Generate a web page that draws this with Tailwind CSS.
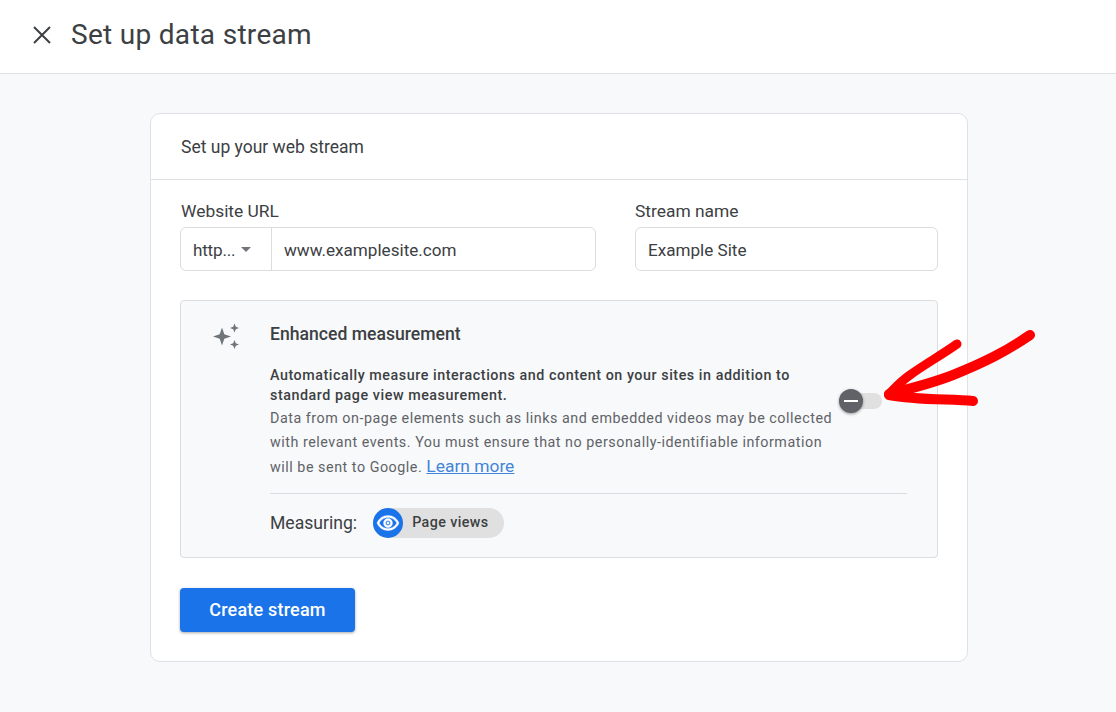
<!DOCTYPE html>
<html lang="en">
<head>
  <meta charset="UTF-8">
  <title>Set up data stream</title>
  <script src="https://cdn.jsdelivr.net/npm/@tailwindcss/browser@4"></script>
</head>
<body class="relative h-[712px] w-[1116px] overflow-hidden bg-[#f8f9fa] font-['Roboto',sans-serif] text-[#3c4043]">
  <!-- Top bar -->
  <header class="flex h-[74px] items-center border-b border-[#dfe1e4] bg-white pb-[3px] pl-[33px]">
    <svg class="h-[18px] w-[18px]" viewBox="0 0 18 18" fill="none" stroke="#3c4043" stroke-width="2"><path d="M1 1l16 16M17 1L1 17"/></svg>
    <h1 class="ml-[20px] text-[28px] leading-none tracking-[0.3px]">Set up data stream</h1>
  </header>

  <!-- Card -->
  <main class="ml-[150px] mt-[39px] h-[549px] w-[818px] rounded-[10px] border border-[#dfe1e4] bg-white">
    <div class="flex h-[66px] items-center border-b border-[#dfe1e4] pl-[30px] pt-[1px] text-[17.5px]">Set up your web stream</div>
    <div class="px-[29px]">
      <div class="mt-[21px] flex">
        <div class="w-[416px]">
          <label class="block pl-[1px] text-[17.4px] leading-[20px]">Website URL</label>
          <div class="mt-[6px] flex h-[44px] rounded-[6px] border border-[#dadce0] text-[17.1px]">
            <div class="flex w-[91px] items-center border-r border-[#dadce0] pl-[12px] pt-[4px]">
              <span class="tracking-[-0.2px]">http...</span>
              <span class="ml-[6px] mb-[3px] h-0 w-0 border-x-[5.5px] border-t-[5.5px] border-x-transparent border-t-[#70757a]"></span>
            </div>
            <div class="flex items-center pl-[12px] pt-[4px]">www.examplesite.com</div>
          </div>
        </div>
        <div class="ml-[39px] w-[303px]">
          <label class="block text-[17.4px] leading-[20px]">Stream name</label>
          <div class="mt-[6px] flex h-[44px] items-center rounded-[6px] border border-[#dadce0] pl-[12px] pt-[4px] text-[17.1px]">Example Site</div>
        </div>
      </div>

      <!-- Enhanced measurement -->
      <section class="mt-[29px] flex h-[258px] w-[758px] rounded-[4px] border border-[#dadce0] bg-[#f8f9fa]">
        <div class="w-[89px] pl-[30px] pt-[21px]">
          <svg class="h-[30px] w-[30px]" viewBox="0 0 30 30" fill="#70757a">
            <path d="M11 5.500l2.300 6.700 6.700 2.300-6.700 2.300L11 23.500l-2.300-6.700L2 14.500l6.700-2.300z"/>
            <path d="M23.500 1.500l1.300 3.200 3.200 1.300-3.200 1.300-1.300 3.200-1.300-3.200L19 6l3.200-1.300z"/>
            <path d="M23.500 18l1.300 3.200 3.200 1.300-3.200 1.300-1.300 3.200-1.300-3.200-3.200-1.300 3.200-1.300z"/>
          </svg>
        </div>
        <div class="w-[637px]">
          <h2 class="mt-[23px] text-[17.6px] font-medium leading-[20px]">Enhanced measurement</h2>
          <div class="relative mt-[21px] h-[108px] text-[14.3px]">
            <p class="w-[570px] font-medium leading-[20px] tracking-[0.55px]">Automatically measure interactions and content on your sites in addition to standard page view measurement.</p>
            <p class="mt-[1px] w-[570px] leading-[24px] tracking-[0.53px] text-[#5f6368]">Data from on-page elements such as links and embedded videos may be collected with relevant events. You must ensure that no personally-identifiable information will be sent to Google. <a href="#" class="text-[17.4px] tracking-normal text-[#4285d9] underline">Learn more</a></p>
            <!-- Toggle -->
            <div class="absolute left-[569px] top-[28px] h-[16px] w-[43px] rounded-full bg-[#e0e0e0]"></div>
            <div class="absolute left-[569px] top-[24px] flex h-[24px] w-[24px] items-center justify-center rounded-full bg-[#5f6368] shadow-[0_1px_3px_rgba(0,0,0,0.4)]">
              <span class="h-[2px] w-[14px] bg-white"></span>
            </div>
          </div>
          <div class="mt-[20px] flex h-[58px] items-center border-t border-[#dadce0] pt-[1px]">
            <span class="text-[17.6px]">Measuring:</span>
            <div class="ml-[16px] flex h-[30px] w-[131px] items-center rounded-full bg-[#e0e0e0]">
              <span class="flex h-[30px] w-[30px] items-center justify-center rounded-full bg-[#1a73e8]">
                <svg class="h-[24px] w-[24px]" viewBox="0 0 24 24" fill="white" stroke="white" stroke-width="0.4"><path d="M12 6.500c3.790 0 7.170 2.130 8.820 5.500-1.650 3.370-5.020 5.500-8.820 5.500S4.830 15.370 3.180 12C4.830 8.630 8.210 6.500 12 6.500m0-2C7 4.500 2.730 7.610 1 12c1.730 4.390 6 7.500 11 7.500s9.270-3.110 11-7.500c-1.730-4.390-6-7.500-11-7.500zm0 5c1.380 0 2.500 1.120 2.500 2.500s-1.120 2.500-2.500 2.500-2.500-1.120-2.500-2.500 1.120-2.500 2.500-2.500m0-2c-2.480 0-4.500 2.020-4.500 4.500s2.020 4.500 4.500 4.500 4.500-2.020 4.500-4.500-2.020-4.500-4.500-4.500z"/><circle cx="12" cy="12" r="1.200"/></svg>
              </span>
              <span class="ml-[9px] text-[14.3px] font-medium tracking-[0.4px]">Page views</span>
            </div>
          </div>
        </div>
      </section>

      <button class="mt-[30px] h-[44px] w-[175px] rounded-[4px] bg-[#1a73e8] pb-[2px] text-[18px] font-medium tracking-[0.2px] text-white shadow-[0_1px_3px_rgba(60,64,67,0.45)]">Create stream</button>
    </div>
  </main>

  <!-- Red annotation arrow -->
  <svg class="absolute left-0 top-0" width="1116" height="712" fill="none" stroke="#ff0000" stroke-linecap="round" stroke-linejoin="round">
    <path d="M1030 335C1005 352 985 362 953 375C930 384 905 390 889 394" stroke-width="10"/>
    <path d="M957 344C940 356 925 364 910 375C900 382 895 388 889 394" stroke-width="9"/>
    <path d="M973 401C950 399 915 400 889 395" stroke-width="10"/>
  </svg>
</body>
</html>
